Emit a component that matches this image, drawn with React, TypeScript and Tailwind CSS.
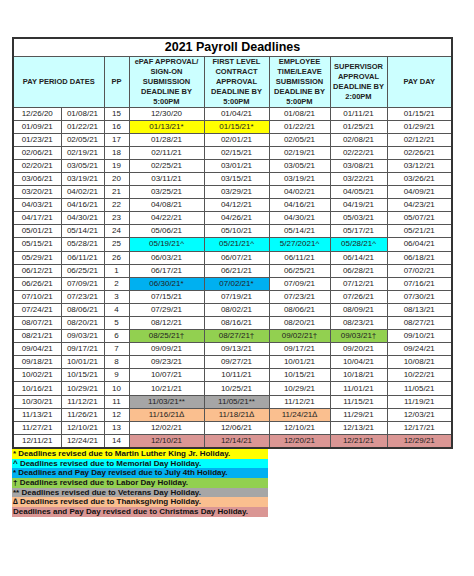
import React from "react";

type Cell = string | [string, string];

const Y = "bg-[#ffff00]";
const C = "bg-[#00ffff]";
const B = "bg-[#00b0f0]";
const G = "bg-[#92d050]";
const S = "bg-[#a6a6a6]";
const O = "bg-[#fabf8f]";
const R = "bg-[#da9694]";

const rows: Cell[][] = [
  ["12/26/20", "01/08/21", "15", "12/30/20", "01/04/21", "01/08/21", "01/11/21", "01/15/21"],
  ["01/09/21", "01/22/21", "16", ["01/13/21*", Y], ["01/15/21*", Y], "01/22/21", "01/25/21", "01/29/21"],
  ["01/23/21", "02/05/21", "17", "01/28/21", "02/01/21", "02/05/21", "02/08/21", "02/12/21"],
  ["02/06/21", "02/19/21", "18", "02/11/21", "02/15/21", "02/19/21", "02/22/21", "02/26/21"],
  ["02/20/21", "03/05/21", "19", "02/25/21", "03/01/21", "03/05/21", "03/08/21", "03/12/21"],
  ["03/06/21", "03/19/21", "20", "03/11/21", "03/15/21", "03/19/21", "03/22/21", "03/26/21"],
  ["03/20/21", "04/02/21", "21", "03/25/21", "03/29/21", "04/02/21", "04/05/21", "04/09/21"],
  ["04/03/21", "04/16/21", "22", "04/08/21", "04/12/21", "04/16/21", "04/19/21", "04/23/21"],
  ["04/17/21", "04/30/21", "23", "04/22/21", "04/26/21", "04/30/21", "05/03/21", "05/07/21"],
  ["05/01/21", "05/14/21", "24", "05/06/21", "05/10/21", "05/14/21", "05/17/21", "05/21/21"],
  ["05/15/21", "05/28/21", "25", ["05/19/21^", C], ["05/21/21^", C], ["5/27/2021^", C], ["05/28/21^", C], "06/04/21"],
  ["05/29/21", "06/11/21", "26", "06/03/21", "06/07/21", "06/11/21", "06/14/21", "06/18/21"],
  ["06/12/21", "06/25/21", "1", "06/17/21", "06/21/21", "06/25/21", "06/28/21", "07/02/21"],
  ["06/26/21", "07/09/21", "2", ["06/30/21*", B], ["07/02/21*", B], "07/09/21", "07/12/21", "07/16/21"],
  ["07/10/21", "07/23/21", "3", "07/15/21", "07/19/21", "07/23/21", "07/26/21", "07/30/21"],
  ["07/24/21", "08/06/21", "4", "07/29/21", "08/02/21", "08/06/21", "08/09/21", "08/13/21"],
  ["08/07/21", "08/20/21", "5", "08/12/21", "08/16/21", "08/20/21", "08/23/21", "08/27/21"],
  ["08/21/21", "09/03/21", "6", ["08/25/21\u2020", G], ["08/27/21\u2020", G], ["09/02/21\u2020", G], ["09/03/21\u2020", G], "09/10/21"],
  ["09/04/21", "09/17/21", "7", "09/09/21", "09/13/21", "09/17/21", "09/20/21", "09/24/21"],
  ["09/18/21", "10/01/21", "8", "09/23/21", "09/27/21", "10/01/21", "10/04/21", "10/08/21"],
  ["10/02/21", "10/15/21", "9", "10/07/21", "10/11/21", "10/15/21", "10/18/21", "10/22/21"],
  ["10/16/21", "10/29/21", "10", "10/21/21", "10/25/21", "10/29/21", "11/01/21", "11/05/21"],
  ["10/30/21", "11/12/21", "11", ["11/03/21**", S], ["11/05/21**", S], "11/12/21", "11/15/21", "11/19/21"],
  ["11/13/21", "11/26/21", "12", ["11/16/21\u2206", O], ["11/18/21\u2206", O], ["11/24/21\u2206", O], "11/29/21", "12/03/21"],
  ["11/27/21", "12/10/21", "13", "12/02/21", "12/06/21", "12/10/21", "12/13/21", "12/17/21"],
  ["12/11/21", "12/24/21", "14", ["12/10/21", R], ["12/14/21", R], ["12/20/21", R], ["12/21/21", R], ["12/29/21", R]],
];

const legend: [string, string][] = [
  ["* Deadlines revised due to Martin Luther King Jr. Holiday.", Y],
  ["^ Deadlines revised due to Memorial Day Holiday.", C],
  ["* Deadlines and Pay Day revised due to July 4th Holiday.", B],
  ["\u2020 Deadlines revised due to Labor Day Holiday.", G],
  ["** Deadlines revised due to Veterans Day Holiday.", S],
  ["\u2206 Deadlines revised due to Thanksgiving Holiday.", O],
  ["Deadlines and Pay Day revised due to Christmas Day Holiday.", R],
];

const th =
  "border border-[#555] bg-[#ccffff] text-center align-middle font-bold text-[7.5px] leading-[10px] text-[#222] p-0";

export default function App() {
  return (
    <div
      className="w-[474px] h-[576px] bg-white pt-[37px] pl-[12px]"
      style={{ fontFamily: '"Liberation Sans", Arial, sans-serif' }}
    >
      <table className="table-fixed border-collapse border-2 border-[#333] w-[439px]">
        <colgroup>
          <col className="w-[48px]" />
          <col className="w-[43px]" />
          <col className="w-[25px]" />
          <col className="w-[75px]" />
          <col className="w-[65px]" />
          <col className="w-[61px]" />
          <col className="w-[57px]" />
          <col className="w-[65px]" />
        </colgroup>
        <thead>
          <tr className="h-[18px]">
            <th colSpan={8} className="border border-[#555] bg-white text-center font-bold text-[12.5px] leading-[16px] text-black p-0">
              2021 Payroll Deadlines
            </th>
          </tr>
          <tr className="h-[49px]">
            <th colSpan={2} className={th}>PAY PERIOD DATES</th>
            <th className={th}>PP</th>
            <th className={th}>
              ePAF APPROVAL/
              <br />
              SIGN-ON
              <br />
              SUBMISSION
              <br />
              DEADLINE BY
              <br />
              5:00PM
            </th>
            <th className={th}>
              FIRST LEVEL
              <br />
              CONTRACT
              <br />
              APPROVAL
              <br />
              DEADLINE BY
              <br />
              5:00PM
            </th>
            <th className={th}>
              EMPLOYEE
              <br />
              TIME/LEAVE
              <br />
              SUBMISSION
              <br />
              DEADLINE BY
              <br />
              5:00PM
            </th>
            <th className={th}>
              SUPERVISOR
              <br />
              APPROVAL
              <br />
              DEADLINE BY
              <br />
              2:00PM
            </th>
            <th className={th}>PAY DAY</th>
          </tr>
        </thead>
        <tbody>
          {rows.map((r, i) => (
            <tr key={i} className="h-[13.1px]">
              {r.map((c, j) => {
                const text = typeof c === "string" ? c : c[0];
                const bg = typeof c === "string" ? "bg-white" : c[1];
                return (
                  <td
                    key={j}
                    className={`border border-[#555] ${bg} text-center align-middle text-[8px] leading-[12px] text-[#222] p-0 whitespace-nowrap`}
                  >
                    {text}
                  </td>
                );
              })}
            </tr>
          ))}
        </tbody>
      </table>
      <div className="flex w-[256px] flex-col">
        {legend.map(([t, bg], i) => (
          <div
            key={i}
            className={`${bg} h-[9.7px] pl-[1px] text-[8px] font-bold leading-[9.7px] text-[#111] whitespace-nowrap`}
          >
            {t}
          </div>
        ))}
      </div>
    </div>
  );
}
